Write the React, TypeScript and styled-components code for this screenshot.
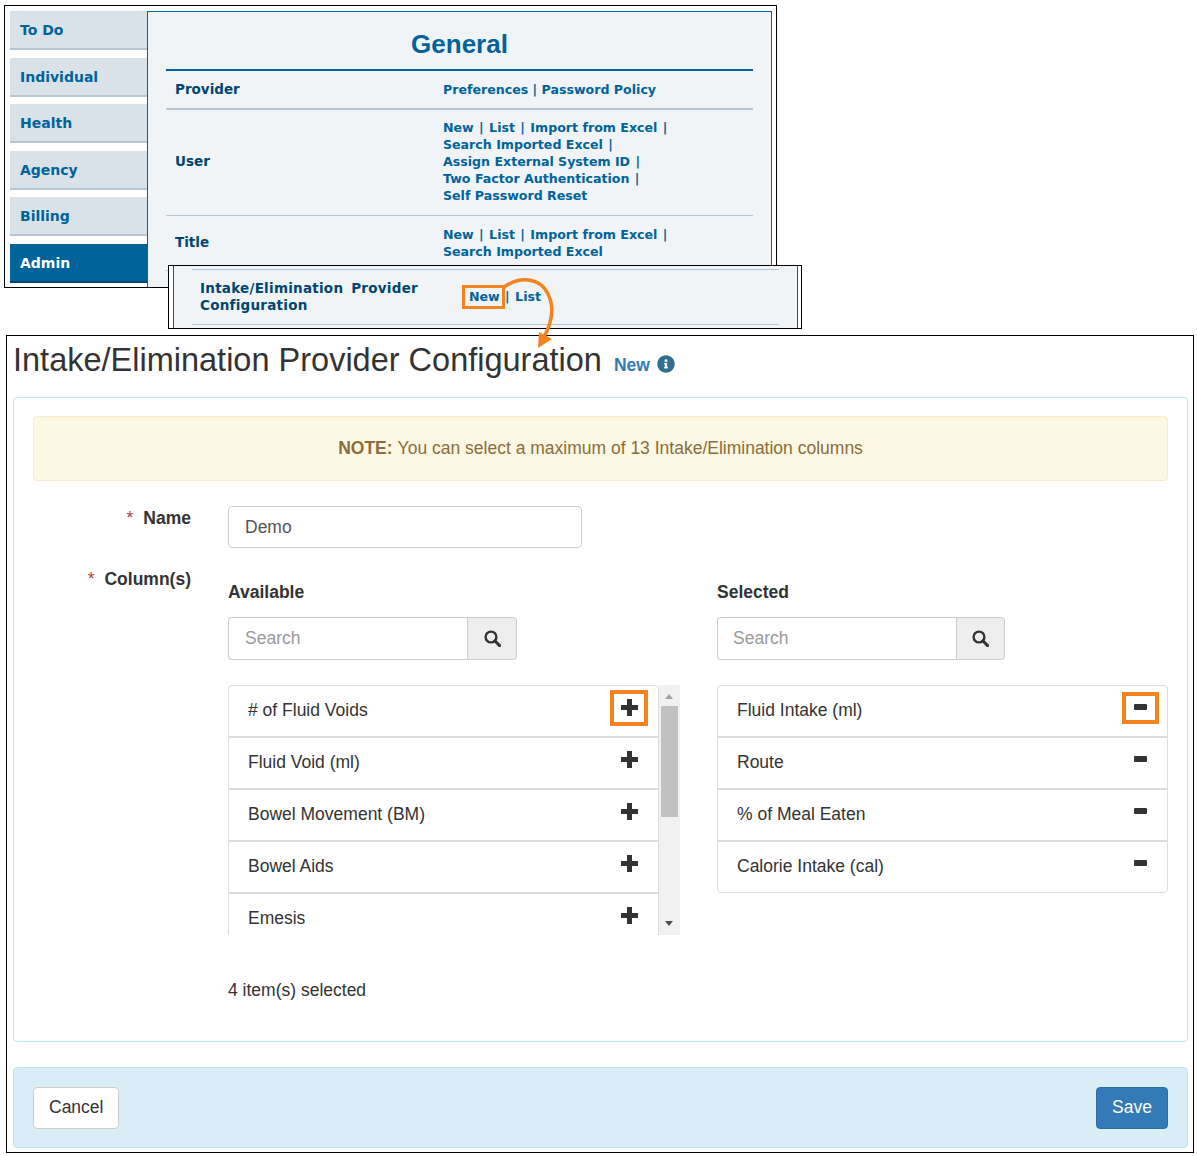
import React from "react";
import styled, { createGlobalStyle } from "styled-components";
import { FaInfoCircle } from "react-icons/fa";

const GlobalStyle = createGlobalStyle`
  html, body { margin: 0; padding: 0; background: #fff; }
  * { box-sizing: border-box; }
`;

const ORANGE = "#f58220";
const NAV_FONT = `"DejaVu Sans", Verdana, sans-serif`;
const UI_FONT = `"Liberation Sans", Arial, sans-serif`;

const Page = styled.div`
  position: relative;
  width: 1197px;
  height: 1156px;
  padding-top: 5px;
  overflow: hidden;
  font-family: ${UI_FONT};
  color: #333;
`;

const TopFrame = styled.div`
  display: flex;
  width: 773px;
  height: 283px;
  margin-left: 4px;
  padding: 5px 4px 0 5px;
  border: 1px solid #000;
  overflow: hidden;
`;

const Sidebar = styled.nav`
  display: flex;
  flex-direction: column;
  gap: 7.6px;
  width: 137px;
  flex: none;
`;

const Tab = styled.div<{ $active?: boolean }>`
  height: 39px;
  padding: 9px 0 0 10px;
  font: bold 14px/20px ${NAV_FONT};
  color: ${(p) => (p.$active ? "#fff" : "#00639a")};
  background: ${(p) => (p.$active ? "#00639a" : "#d8e2e8")};
  border-bottom: 2px solid ${(p) => (p.$active ? "#004a70" : "#b4c7d3")};
`;

const GeneralPanel = styled.section`
  flex: 1;
  height: 290px;
  padding: 0 18px;
  background: #f0f4f7;
  border: 1px solid #00639a;
`;

const PanelHeading = styled.h2`
  margin: 0;
  height: 59px;
  padding-top: 17px;
  text-align: center;
  font: bold 26px/30px ${UI_FONT};
  color: #00639a;
  border-bottom: 2px solid #00639a;
`;

const AdminRow = styled.div<{ $pad: string; $thick?: boolean }>`
  display: flex;
  align-items: center;
  padding: ${(p) => p.$pad};
  padding-left: 9px;
  border-bottom: ${(p) => (p.$thick ? 2 : 1)}px solid #b4c7d3;
`;

const AdminLabel = styled.div<{ $raise?: boolean }>`
  width: 268px;
  flex: none;
  margin-bottom: ${(p) => (p.$raise ? 2 : 0)}px;
  font: bold 13.5px/17px ${NAV_FONT};
  color: #00466e;
`;

const AdminLinks = styled.div`
  font: bold 12.6px/17px ${NAV_FONT};
  color: #00639a;
  white-space: nowrap;
`;

const LinkLine = styled.div``;

const Sep = styled.span`
  margin: 0 1px;
`;

const Strip = styled.div`
  position: absolute;
  left: 168px;
  top: 265px;
  width: 634px;
  height: 64px;
  padding: 0 3px 0 4px;
  background: #fff;
  border: 1px solid #000;
`;

const StripInner = styled.div`
  height: 100%;
  padding: 3px 18px 0;
  background: #f0f4f7;
  border-left: 1px solid #00639a;
  border-right: 1px solid #00639a;
`;

const StripRow = styled.div`
  position: relative;
  display: flex;
  align-items: center;
  height: 56px;
  padding-left: 8px;
  border-top: 1px solid #b4c7d3;
  border-bottom: 1px solid #b4c7d3;
`;

const StripLabel = styled(AdminLabel)`
  width: 269px;
  letter-spacing: 0.25px;
  word-spacing: 3px;
`;

const StripLinks = styled(AdminLinks)`
  margin-bottom: 2px;
`;

const NewHighlight = styled.span`
  position: absolute;
  left: 270px;
  top: 15px;
  width: 43px;
  height: 24px;
  border: 3.5px solid ${ORANGE};
`;

const Arrow = styled.svg`
  position: absolute;
  left: 495px;
  top: 270px;
`;

const MainFrame = styled.main`
  width: 1188px;
  height: 818px;
  margin: 47px 0 0 6px;
  padding: 0 5px 0 6px;
  border: 1px solid #000;
`;

const TitleRow = styled.div`
  display: flex;
  align-items: baseline;
  height: 61px;
  padding-top: 4px;
`;

const Title = styled.h1`
  margin: 0;
  font: normal 32.5px/40px ${UI_FONT};
  color: #333;
`;

const TitleSub = styled.a`
  margin-left: 12px;
  font: bold 17.5px/20px ${UI_FONT};
  color: #337ab7;
`;

const TitleInfo = styled.span`
  align-self: flex-start;
  margin: 15px 0 0 7px;
  color: #31708f;
  font-size: 18px;
  line-height: 18px;
`;

const FormPanel = styled.section`
  height: 645px;
  padding: 18px 19px;
  background: #fff;
  border: 1px solid #bce8f1;
  border-radius: 4px;
`;

const Alert = styled.div`
  display: flex;
  align-items: center;
  justify-content: center;
  gap: 5px;
  height: 65px;
  font-size: 17.5px;
  color: #8a6d3b;
  background: #fcf8e3;
  border: 1px solid #faebcc;
  border-radius: 4px;
`;

const FormRow = styled.div<{ $top: number }>`
  display: grid;
  grid-template-columns: 158px 1fr;
  column-gap: 37px;
  margin-top: ${(p) => p.$top}px;
`;

const FieldLabel = styled.label`
  padding-top: 2px;
  text-align: right;
  font: bold 17.5px/20px ${UI_FONT};
  color: #333;
`;

const Required = styled.span`
  margin-right: 10px;
  font-weight: normal;
  color: #a94442;
`;

const TextInput = styled.input`
  display: block;
  width: 354px;
  height: 42px;
  padding: 0 16px;
  font: 17.5px ${UI_FONT};
  color: #555;
  background: #fff;
  border: 1px solid #ccc;
  border-radius: 4px;
  outline: none;
`;

const DualList = styled.div`
  display: grid;
  grid-template-columns: 452px 451px;
  column-gap: 37px;
  padding-top: 15px;
`;

const ColumnHeading = styled.div`
  font: bold 17.5px/20px ${UI_FONT};
  color: #333;
`;

const SearchGroup = styled.div<{ $width: number }>`
  display: flex;
  width: ${(p) => p.$width}px;
  height: 43px;
  margin: 15px 0 25px;
`;

const SearchInput = styled.input<{ $pad: number }>`
  width: 239px;
  height: 100%;
  padding: 0 ${(p) => p.$pad}px;
  font: 17.5px ${UI_FONT};
  color: #555;
  border: 1px solid #ccc;
  border-right: 0;
  border-radius: 4px 0 0 4px;
  outline: none;
  &::placeholder { color: #999; opacity: 1; }
`;

const SearchAddon = styled.span`
  display: flex;
  align-items: center;
  justify-content: center;
  flex: 1;
  height: 100%;
  background: #eee;
  border: 1px solid #ccc;
  border-radius: 0 4px 4px 0;
`;

const ScrollArea = styled.div`
  display: flex;
  align-items: flex-start;
  height: 250px;
  overflow: hidden;
`;

const ListBox = styled.ul`
  width: 431px;
  flex: none;
  margin: 0;
  padding: 0;
  list-style: none;
  background: #fff;
  border: 1px solid #ddd;
  border-radius: 4px;
`;

const AvailableBox = styled(ListBox)`
  height: 280px;
`;

const SelectedBox = styled(ListBox)`
  width: 451px;
`;

const ListRow = styled.li<{ $right: number }>`
  position: relative;
  display: flex;
  align-items: flex-start;
  justify-content: space-between;
  height: 52px;
  padding: 14px ${(p) => p.$right}px 0 19px;
  font-size: 17.5px;
  line-height: 20px;
  color: #333;
  border-bottom: 2px solid #ddd;
  &:last-child { height: 50px; border-bottom: 0; }
`;

const RowIcon = styled.svg`
  flex: none;
  margin-top: -1px;
  fill: #333;
`;

const IconHighlight = styled.span<{ $left: number; $width: number; $top: number; $height: number }>`
  position: absolute;
  left: ${(p) => p.$left}px;
  top: ${(p) => p.$top}px;
  width: ${(p) => p.$width}px;
  height: ${(p) => p.$height}px;
  border: 4px solid ${ORANGE};
`;

const FakeScrollbar = styled.div`
  position: relative;
  width: 21px;
  height: 250px;
  flex: none;
  background: #f1f1f1;
`;

const ScrollThumb = styled.div`
  position: absolute;
  left: 2px;
  top: 21px;
  width: 17px;
  height: 111px;
  background: #c1c1c1;
`;

const ScrollArrowUp = styled.span`
  position: absolute;
  left: 6px;
  top: 9px;
  border: 4.5px solid transparent;
  border-top: 0;
  border-bottom: 5px solid #a3a3a3;
`;

const ScrollArrowDown = styled.span`
  position: absolute;
  left: 6px;
  bottom: 9px;
  border: 4.5px solid transparent;
  border-bottom: 0;
  border-top: 5px solid #505050;
`;

const SelectedCount = styled.div`
  margin-top: 45px;
  font-size: 17.5px;
  line-height: 20px;
  color: #333;
`;

const Footer = styled.footer`
  display: flex;
  align-items: center;
  justify-content: space-between;
  height: 81px;
  margin-top: 25px;
  padding: 0 19px;
  background: #d9edf7;
  border: 1px solid #bce8f1;
  border-radius: 4px;
`;

const Button = styled.button<{ $primary?: boolean }>`
  height: 42px;
  padding: 0 15px;
  font: 17.5px ${UI_FONT};
  color: ${(p) => (p.$primary ? "#fff" : "#333")};
  background: ${(p) => (p.$primary ? "#337ab7" : "#fff")};
  border: 1px solid ${(p) => (p.$primary ? "#2e6da4" : "#ccc")};
  border-radius: 4px;
`;

const PlusIcon = () => (
  <RowIcon width="17" height="17" viewBox="0 0 17 17" aria-hidden="true">
    <path d="M6 0h5v6h6v5h-6v6H6v-6H0V6h6z" />
  </RowIcon>
);

const MinusIcon = () => (
  <RowIcon width="17" height="17" viewBox="0 0 17 17" aria-hidden="true">
    <rect x="2" y="5" width="13" height="6" rx="1" />
  </RowIcon>
);

const SearchIcon = () => (
  <svg width="17" height="17" viewBox="0 0 17 17" aria-hidden="true">
    <circle cx="7" cy="7" r="5.4" fill="none" stroke="#333" strokeWidth="2.4" />
    <path d="M10.8 10.8 L15.6 15.6" fill="none" stroke="#333" strokeWidth="3" strokeLinecap="round" />
  </svg>
);

const tabs = ["To Do", "Individual", "Health", "Agency", "Billing", "Admin"];
const available = ["# of Fluid Voids", "Fluid Void (ml)", "Bowel Movement (BM)", "Bowel Aids", "Emesis"];
const selected = ["Fluid Intake (ml)", "Route", "% of Meal Eaten", "Calorie Intake (cal)"];

const ImportLine = () => (
  <LinkLine>New <Sep>|</Sep> List <Sep>|</Sep> Import from Excel <Sep>|</Sep></LinkLine>
);

export default function App() {
  return (
    <Page>
      <GlobalStyle />
      <TopFrame>
        <Sidebar>
          {tabs.map((t) => (
            <Tab key={t} $active={t === "Admin"}>{t}</Tab>
          ))}
        </Sidebar>
        <GeneralPanel>
          <PanelHeading>General</PanelHeading>
          <AdminRow $pad="10px 0" $thick>
            <AdminLabel>Provider</AdminLabel>
            <AdminLinks>Preferences | Password Policy</AdminLinks>
          </AdminRow>
          <AdminRow $pad="9px 0 11px">
            <AdminLabel>User</AdminLabel>
            <AdminLinks>
              <ImportLine />
              <LinkLine>Search Imported Excel <Sep>|</Sep></LinkLine>
              <LinkLine>Assign External System ID <Sep>|</Sep></LinkLine>
              <LinkLine>Two Factor Authentication <Sep>|</Sep></LinkLine>
              <LinkLine>Self Password Reset</LinkLine>
            </AdminLinks>
          </AdminRow>
          <AdminRow $pad="10px 0">
            <AdminLabel $raise>Title</AdminLabel>
            <AdminLinks>
              <ImportLine />
              <LinkLine>Search Imported Excel</LinkLine>
            </AdminLinks>
          </AdminRow>
        </GeneralPanel>
      </TopFrame>

      <MainFrame>
        <TitleRow>
          <Title>Intake/Elimination Provider Configuration</Title>
          <TitleSub>New</TitleSub>
          <TitleInfo><FaInfoCircle /></TitleInfo>
        </TitleRow>
        <FormPanel>
          <Alert>
            <strong>NOTE:</strong> You can select a maximum of 13 Intake/Elimination columns
          </Alert>
          <FormRow $top={25}>
            <FieldLabel><Required>*</Required>Name</FieldLabel>
            <TextInput value="Demo" readOnly />
          </FormRow>
          <FormRow $top={19}>
            <FieldLabel><Required>*</Required>Column(s)</FieldLabel>
            <div>
              <DualList>
                <div>
                  <ColumnHeading>Available</ColumnHeading>
                  <SearchGroup $width={289}>
                    <SearchInput $pad={16} placeholder="Search" readOnly />
                    <SearchAddon><SearchIcon /></SearchAddon>
                  </SearchGroup>
                  <ScrollArea>
                    <AvailableBox>
                      {available.map((item, i) => (
                        <ListRow key={item} $right={20}>
                          {item}
                          <PlusIcon />
                          {i === 0 && <IconHighlight $left={381} $top={4} $width={38} $height={36} />}
                        </ListRow>
                      ))}
                    </AvailableBox>
                    <FakeScrollbar>
                      <ScrollArrowUp />
                      <ScrollThumb />
                      <ScrollArrowDown />
                    </FakeScrollbar>
                  </ScrollArea>
                </div>
                <div>
                  <ColumnHeading>Selected</ColumnHeading>
                  <SearchGroup $width={288}>
                    <SearchInput $pad={15} placeholder="Search" readOnly />
                    <SearchAddon><SearchIcon /></SearchAddon>
                  </SearchGroup>
                  <SelectedBox>
                    {selected.map((item, i) => (
                      <ListRow key={item} $right={18}>
                        {item}
                        <MinusIcon />
                        {i === 0 && <IconHighlight $left={404} $top={6} $width={37} $height={32} />}
                      </ListRow>
                    ))}
                  </SelectedBox>
                </div>
              </DualList>
              <SelectedCount>4 item(s) selected</SelectedCount>
            </div>
          </FormRow>
        </FormPanel>
        <Footer>
          <Button>Cancel</Button>
          <Button $primary>Save</Button>
        </Footer>
      </MainFrame>

      <Strip>
        <StripInner>
          <StripRow>
            <StripLabel>Intake/Elimination Provider Configuration</StripLabel>
            <StripLinks>New <Sep>|</Sep> List</StripLinks>
            <NewHighlight />
          </StripRow>
        </StripInner>
      </Strip>

      <Arrow width="70" height="85" viewBox="0 0 70 85" aria-hidden="true">
        <path d="M9 17 C24 7 44 6 53 24 C60 38 56 54 49 67" fill="none" stroke={ORANGE} strokeWidth="3.5" />
        <path d="M43 78 L44 62 L57 69 Z" fill={ORANGE} />
      </Arrow>
    </Page>
  );
}
